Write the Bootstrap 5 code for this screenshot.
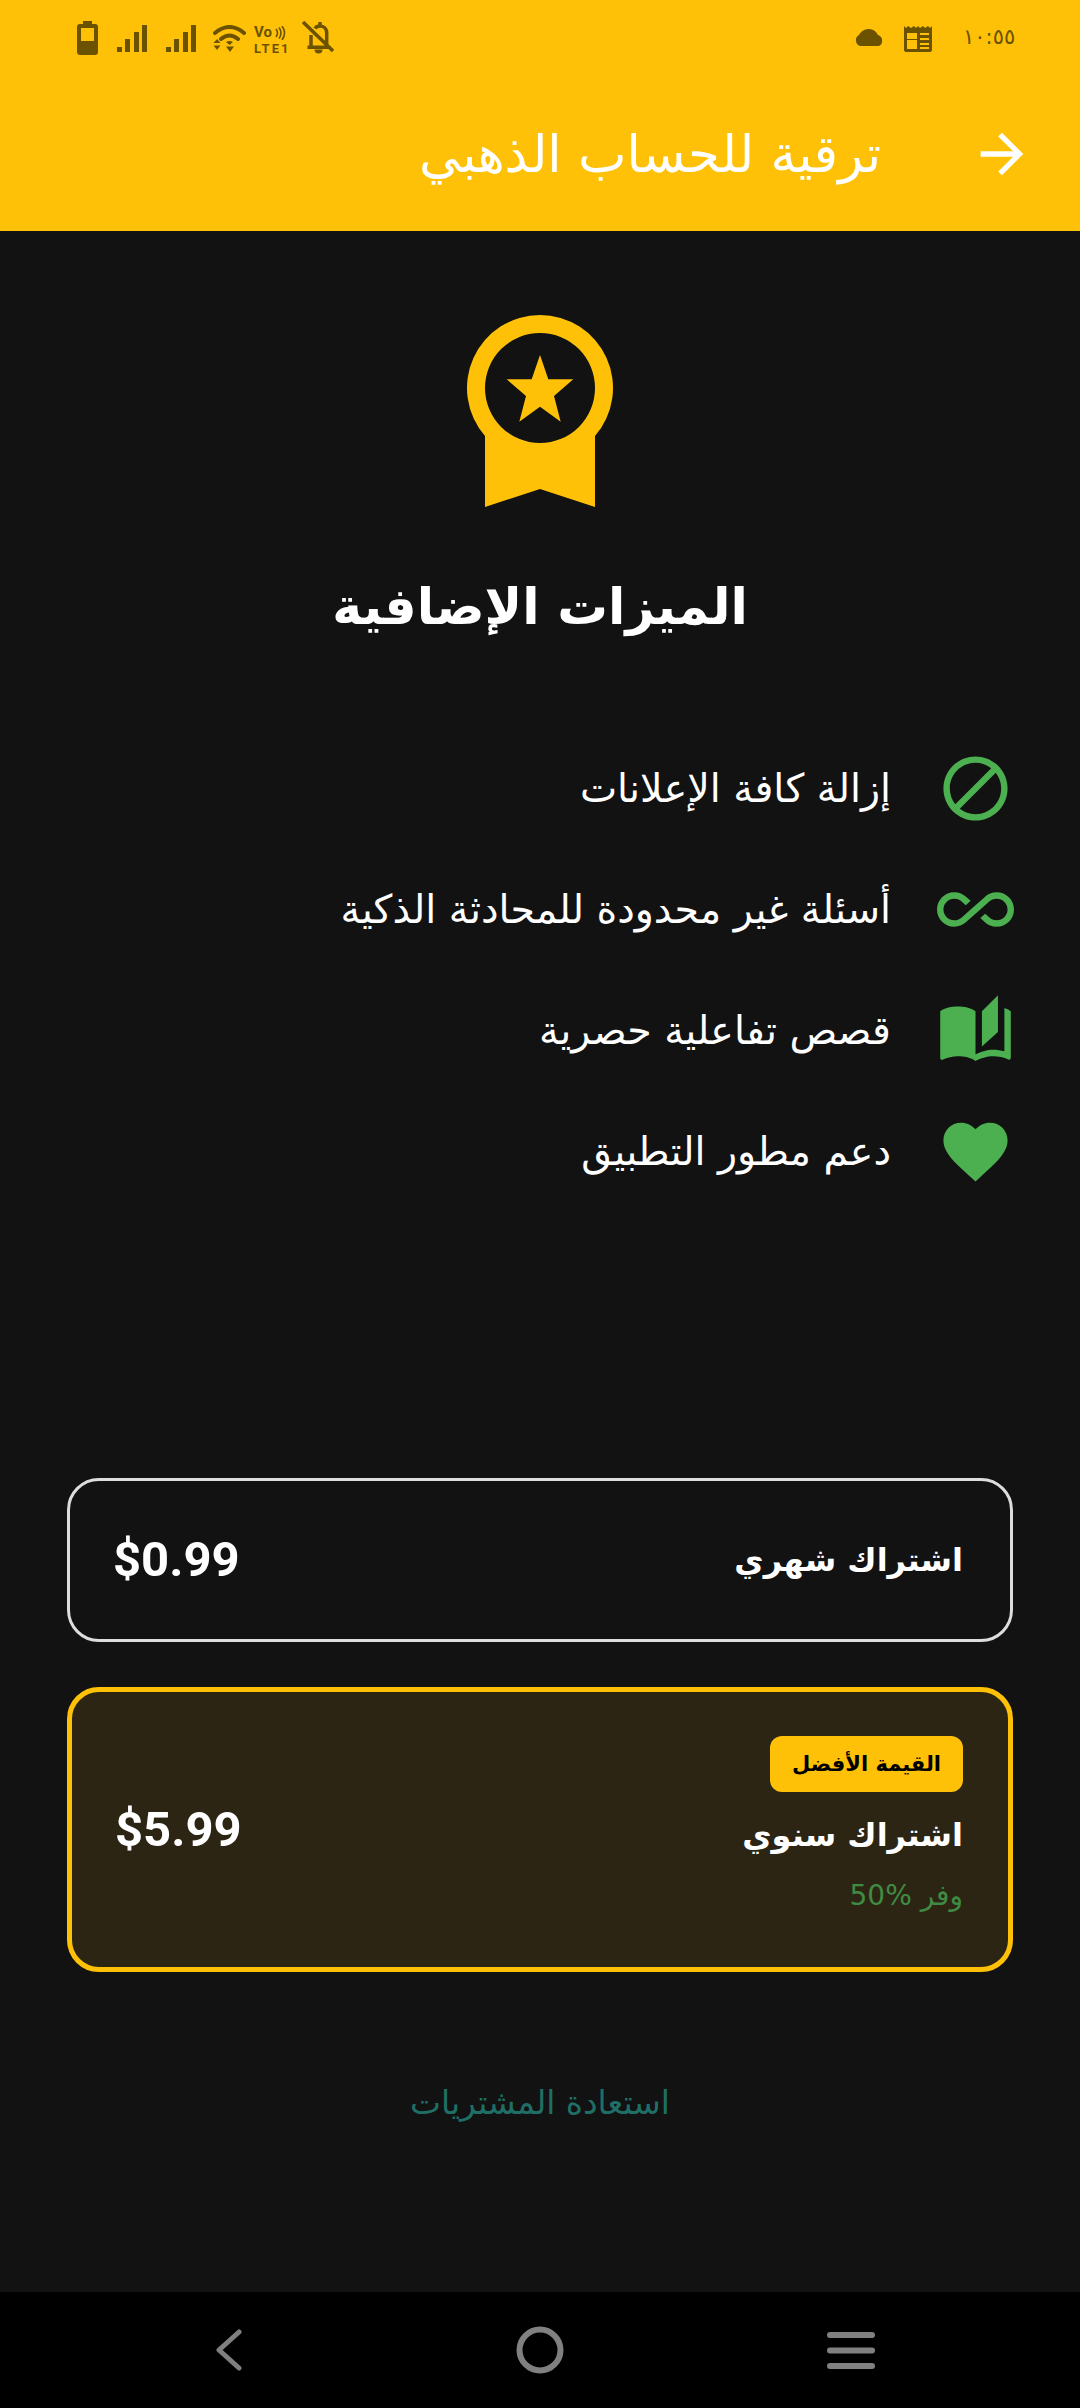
<!DOCTYPE html>
<html lang="ar" dir="rtl">
<head>
    <meta charset="UTF-8">
    <meta name="viewport" content="width=device-width, initial-scale=1.0">
    <title>ترقية للحساب الذهبي</title>
    <link href="https://cdn.jsdelivr.net/npm/bootstrap@5.3.0/dist/css/bootstrap.min.css" rel="stylesheet">
    <style>
body {
    background: #121212;
    color: #fff;
    font-family: "DejaVu Sans", sans-serif;
}
.app-screen { width: 1080px; height: 2408px; overflow: hidden; }
.top-area { background: #FFC107; height: 231px; }
.status-row { height: 76px; padding: 21px 67px 0 77px; color: #6b5200; }
.status-row svg { display: block; fill: currentColor; }
.sig-ico { margin: 4px 0 0 19px; }
.wifi-ico { margin: 4px 0 0 17px; }
.bell-ico { margin-left: 13px; }
.news-ico { margin: 4px 0 0 19px; }
.clock-txt { font-size: 21px; line-height: 20px; margin-top: 6px; margin-left: 31px; width: 50px; }
.vo-txt { font-family: "Roboto", sans-serif; font-weight: 700; width: 35px; position: relative; margin: 3px 0 0 8px; }
.vo-top { font-size: 15px; line-height: 17px; }
.vo-low { font-size: 13px; line-height: 15px; letter-spacing: 2px; }
.status-row .vo-waves { position: absolute; top: 2px; left: 20px; fill: none; stroke: currentColor; stroke-width: 1.600; }
.title-row { padding: 46px 46px 0 0; }
.title-row svg { fill: #fff; flex: none; }
.top-title { font-size: 51.500px; margin: 0 89px 0 0; font-weight: 400; line-height: 64px; }
.medal-box { margin-top: 84px; height: 192px; }
.main-title { font-size: 50.600px; font-weight: 700; margin: 59px 0 0; line-height: 82px; text-align: center; }
.feature-list { margin-top: 80px; padding-right: 66px; }
.feature-row { height: 121px; }
.feature-row svg { fill: #4CAF50; width: 77px; height: 77px; flex: none; }
.feature-txt { font-size: 39.500px; margin-right: 46px; }
.plan-wrap { margin: 0 67px; }
.plan-box { border-radius: 32px; padding: 0 48px; }
.plan-month { margin-top: 266px; height: 164px; border: 3px solid #ddd; padding-left: 43px; padding-right: 47px; }
.plan-year { margin-top: 45px; height: 285px; border: 5px solid #FFC107; background: #2c2513; padding-right: 45px; padding-left: 43px; }
.year-col { padding-bottom: 8px; }
.plan-name { font-size: 32px; font-weight: 700; line-height: 50px; }
.plan-price { font-family: "Roboto", sans-serif; font-weight: 700; font-size: 49px; }
.best-tag { background: #FFC107; color: #000; font-size: 21px; font-weight: 700; border-radius: 12px; height: 56px; padding: 0 22px; line-height: 56px; }
.year-name { margin-top: 18px; }
.save-txt { color: #3f8b43; font-size: 28px; line-height: 40px; margin-top: 16px; }
.restore-txt { color: #1f6f66; font-size: 32.800px; text-align: center; margin-top: 107px; }
.nav-bottom { background: #000; height: 116px; margin-top: auto; padding: 0 74px; }
.nav-slot { width: 311px; }
</style>
</head>
<body>
<div class="app-screen d-flex flex-column">

    <div class="top-area">
        <div class="status-row d-flex justify-content-between" dir="ltr">
            <div class="d-flex align-items-start">
                <svg width="21" height="34" viewBox="0 0 21 34"><path fill-rule="evenodd" d="M6 0h9v3h3a3 3 0 0 1 3 3v25a3 3 0 0 1-3 3H3a3 3 0 0 1-3-3V6a3 3 0 0 1 3-3h3zM4 7v13h13V7z"/></svg>
                <svg class="sig-ico" width="30" height="28" viewBox="0 0 30 28"><path d="M0 22h5v5H0zM8 14h5v13H8zM17 7h5v20h-5zM25 0h5v27h-5z"/></svg>
                <svg class="sig-ico" width="30" height="28" viewBox="0 0 30 28"><path d="M0 22h5v5H0zM8 14h5v13H8zM17 7h5v20h-5zM25 0h5v27h-5z"/></svg>
                <svg class="wifi-ico" width="33" height="28" viewBox="0 0 33 28"><path d="M2 8Q16.500-4 31 8M8 14Q16.500 7 25 14" fill="none" stroke="currentColor" stroke-width="4" stroke-linecap="round"/><path d="M13 17Q16.500 15 20 17L16.500 20zM0.500 18L4 14l3.500 4zM0.500 20.500h7L4 25zM13 21.500h8L17 27z"/></svg>
                <div class="vo-txt">
                    <div class="vo-top">Vo</div>
                    <div class="vo-low">LTE1</div>
                    <svg class="vo-waves" width="14" height="14" viewBox="0 0 14 14"><path d="M2 3Q5 7 2 11M5 1.500Q9 7 5 12.500M8 0Q13 7 8 14"/></svg>
                </div>
                <svg class="bell-ico" width="32" height="33" viewBox="0 0 32 33"><path d="M9 25V14M13 7.500C14 6 16 5 18 5V1M18 5c4 0 6.700 3 6.700 7v11.700M5.500 26.300H27M1 1l30 29" fill="none" stroke="currentColor" stroke-width="3.500"/><path d="M12.500 28.500h8a4 4 0 0 1-8 0z"/></svg>
            </div>
            <div class="d-flex align-items-start">
                <svg class="mt-2" width="31" height="17" viewBox="0 0 31 17"><path d="M6 17a6 6 0 0 1-1-11C7 2 11 0 15 0c4 0 7 2 9 6a6 6 0 0 1 1 11z"/></svg>
                <svg class="news-ico" width="28" height="27" viewBox="0 0 28 27"><path fill-rule="evenodd" d="M0 1l2 2 2-2 3 2 3-2 2 2 2-2 2 2 3-2 2 2 3-2 2 2 2-2v24a2 2 0 0 1-2 2H2a2 2 0 0 1-2-2zM3 8v16h10V15H3v-1h10V8zM16 8v2h9V8zM16 13v2h9v-2zM16 18v2h9v-2zM16 22v2h9v-2z"/></svg>
                <div class="clock-txt">١٠:٥٥</div>
            </div>
        </div>
        <div class="title-row d-flex align-items-center">
            <svg width="64" height="64" viewBox="0 0 24 24"><path d="M4 11h12.170l-5.590-5.590L12 4l8 8-8 8-1.410-1.410L16.170 13H4z"/></svg>
            <h1 class="top-title">ترقية للحساب الذهبي</h1>
        </div>
    </div>

    <div class="medal-box d-flex justify-content-center">
        <svg width="146" height="192" viewBox="0 0 146 192">
            <path fill="#FFC107" fill-rule="evenodd" d="M73 0a73 73 0 0 1 55 121v71l-55-18-55 18V121A73 73 0 0 1 73 0zM73 18a55 55 0 1 0 0 110a55 55 0 1 0 0-110z"/>
            <path fill="#FFC107" d="M73 40L81.300 64.300H106.300L87 81L93.700 106.700L73 91.700L52.300 106.700L59 81L39.700 64.300H64.700z"/>
        </svg>
    </div>

    <h2 class="main-title">الميزات الإضافية</h2>

    <div class="feature-list">
        <div class="feature-row d-flex align-items-center">
            <svg viewBox="0 0 24 24"><path d="M12 2C6.480 2 2 6.480 2 12s4.480 10 10 10 10-4.480 10-10S17.520 2 12 2zM4 12c0-4.420 3.580-8 8-8 1.850 0 3.550.630 4.900 1.690L5.690 16.900C4.630 15.550 4 13.850 4 12zm8 8c-1.850 0-3.550-.630-4.900-1.690L18.310 7.100C19.370 8.450 20 10.150 20 12c0 4.420-3.580 8-8 8z"/></svg>
            <span class="feature-txt">إزالة كافة الإعلانات</span>
        </div>
        <div class="feature-row d-flex align-items-center">
            <svg viewBox="0 0 24 24"><path d="M18.600 6.620c-1.440 0-2.800.560-3.770 1.530L12 10.660 10.480 12h.010L7.800 14.390c-.640.640-1.490.990-2.400.990-1.870 0-3.390-1.510-3.390-3.380S3.530 8.620 5.400 8.620c.910 0 1.760.350 2.440 1.030l1.130 1 1.510-1.340L9.220 8.200C8.200 7.180 6.840 6.620 5.400 6.620 2.420 6.620 0 9.040 0 12s2.420 5.380 5.400 5.380c1.440 0 2.800-.560 3.770-1.530l2.830-2.500.010.010L13.520 12h-.010l2.690-2.390c.640-.640 1.490-.990 2.400-.990 1.870 0 3.390 1.510 3.390 3.380s-1.520 3.380-3.390 3.380c-.900 0-1.760-.350-2.440-1.030l-1.140-1.010-1.510 1.340 1.270 1.120c1.020 1.010 2.370 1.570 3.820 1.570 2.980 0 5.400-2.410 5.400-5.380s-2.420-5.370-5.400-5.370z"/></svg>
            <span class="feature-txt">أسئلة غير محدودة للمحادثة الذكية</span>
        </div>
        <div class="feature-row d-flex align-items-center">
            <svg viewBox="0 0 24 24"><path d="M19 1l-5 5v11l5-4.500V1zM1 6v14.650c0 .250.250.500.500.500.100 0 .150-.050.250-.050C3.100 20.450 5.050 20 6.500 20c1.950 0 4.050.400 5.500 1.500V6c-1.450-1.100-3.550-1.500-5.500-1.500S2.450 4.900 1 6zm22 13.500V6c-.600-.450-1.250-.750-2-1v13.500c-1.100-.350-2.300-.500-3.500-.500-1.700 0-4.150.650-5.500 1.500v2c1.350-.850 3.800-1.500 5.500-1.500 1.650 0 3.350.300 4.750 1.050.100.050.150.050.250.050.250 0 .500-.250.500-.500v-1.100z"/></svg>
            <span class="feature-txt">قصص تفاعلية حصرية</span>
        </div>
        <div class="feature-row d-flex align-items-center">
            <svg viewBox="0 0 24 24"><path d="M12 21.350l-1.450-1.320C5.400 15.360 2 12.280 2 8.500 2 5.420 4.420 3 7.500 3c1.740 0 3.410.810 4.500 2.090C13.090 3.810 14.760 3 16.500 3 19.580 3 22 5.420 22 8.500c0 3.780-3.400 6.860-8.550 11.540L12 21.350z"/></svg>
            <span class="feature-txt">دعم مطور التطبيق</span>
        </div>
    </div>

    <div class="plan-wrap">
        <div class="plan-box plan-month d-flex justify-content-between align-items-center">
            <span class="plan-name">اشتراك شهري</span>
            <span class="plan-price" dir="ltr">$0.99</span>
        </div>
        <div class="plan-box plan-year d-flex justify-content-between align-items-center">
            <div class="year-col d-flex flex-column align-items-start">
                <span class="best-tag">القيمة الأفضل</span>
                <span class="plan-name year-name">اشتراك سنوي</span>
                <span class="save-txt">وفر %50</span>
            </div>
            <span class="plan-price" dir="ltr">$5.99</span>
        </div>
    </div>

    <div class="restore-txt">استعادة المشتريات</div>

    <div class="nav-bottom d-flex align-items-center" dir="ltr">
        <div class="nav-slot d-flex justify-content-center">
            <svg width="26" height="42" viewBox="0 0 26 42"><path d="M23 3L3 21l20 18" fill="none" stroke="#808080" stroke-width="5" stroke-linecap="round" stroke-linejoin="round"/></svg>
        </div>
        <div class="nav-slot d-flex justify-content-center">
            <svg width="48" height="48" viewBox="0 0 48 48"><circle cx="24" cy="24" r="20.500" fill="none" stroke="#808080" stroke-width="6"/></svg>
        </div>
        <div class="nav-slot d-flex justify-content-center">
            <svg width="48" height="37" viewBox="0 0 48 37"><path d="M3 3h42M3 18.500h42M3 34h42" stroke="#808080" stroke-width="6" stroke-linecap="round"/></svg>
        </div>
    </div>
</div>
<script src="https://cdn.jsdelivr.net/npm/bootstrap@5.3.0/dist/js/bootstrap.bundle.min.js"></script>
</body>
</html>
